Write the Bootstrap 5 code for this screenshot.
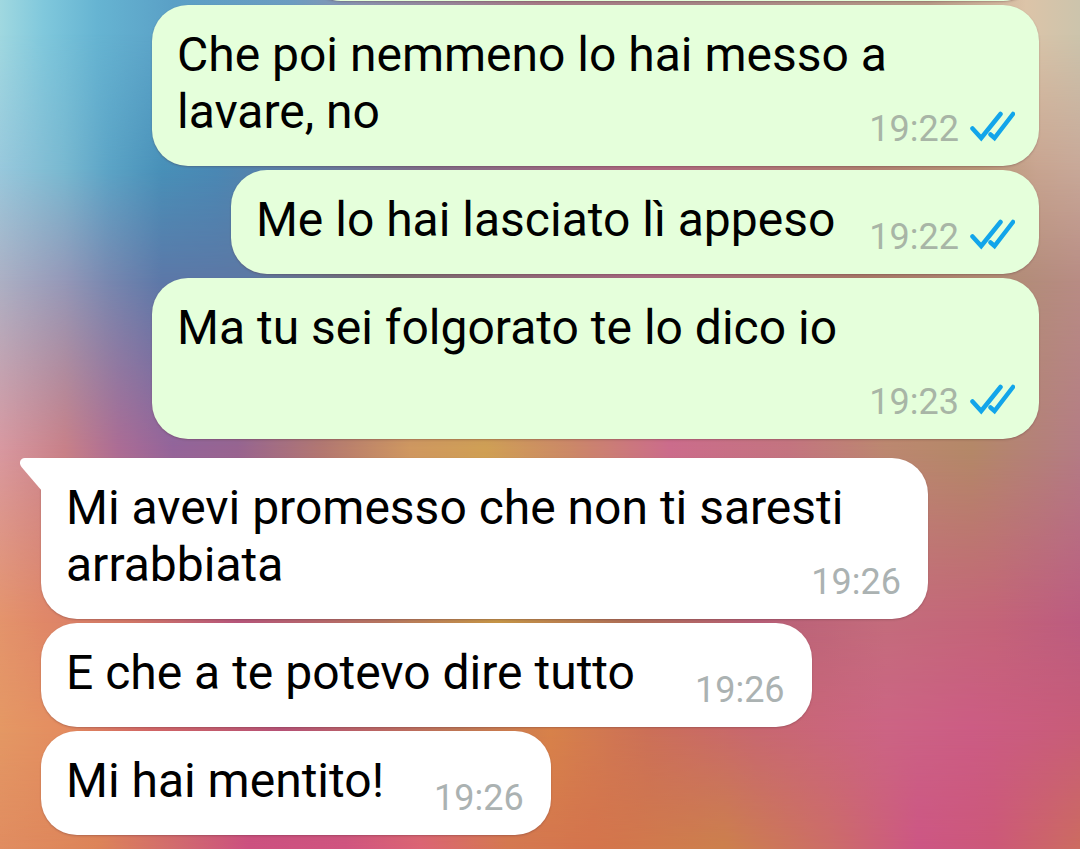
<!DOCTYPE html>
<html lang="it">
<head>
<meta charset="utf-8">
<meta name="viewport" content="width=device-width, initial-scale=1">
<title>Chat</title>
<link href="https://cdn.jsdelivr.net/npm/bootstrap@5.3.0/dist/css/bootstrap.min.css" rel="stylesheet">
<style>
body { font-family: Roboto, sans-serif; color: #000; }
.chat { min-height: 100vh; }
.chat > * { grid-area: 1 / 1; min-width: 0; }
/* wallpaper: horizontal colour bands, each fading in over the one above */
.band { -webkit-mask-image: linear-gradient(transparent var(--from), #000 var(--to)); mask-image: linear-gradient(transparent var(--from), #000 var(--to)); }
.band-1 { background: linear-gradient(90deg, #a0d8e0, #80c8dc 4%, #66b4d2 9%, #5aa0c6 16%, #6c9cc0 27%, #8a94b0 33%, #a87c88 50%, #a88888 65%, #b89c88 86%, #dcc4a8 95%, #ccc4ac); }
.band-2 { --from: 4%; --to: 20%; background: linear-gradient(90deg, #98c8dc, #78b8d0 6%, #5ca4c6 10%, #4890b8 15%, #4a88b4 20%, #806c88 40%, #b06880 60%, #b08070 80%, #b89878 91%, #c8a490 96%, #c8a898); }
.band-3 { --from: 20%; --to: 33%; background: linear-gradient(90deg, #acb0c4, #9498b8 6%, #7888b0 10%, #5c78a8 15%, #5c78a4 23%, #786c70 36%, #a86880 60%, #a87868 80%, #b08c74 92%, #b88c84); }
.band-4 { --from: 33%; --to: 53%; background: linear-gradient(90deg, #d898a0, #c88088 6%, #ac6c94 11%, #94649a 16%, #986490 22%, #b47870 30%, #d09860 38%, #d0a054 45%, #cc8868 53%, #cc6c8c 62%, #c47480 73%, #bc8870 82%, #b48868 90%, #b47c84); }
.band-5 { --from: 53%; --to: 73%; background: linear-gradient(90deg, #e4946c, #e08868 4%, #d47868 12%, #b8587c 22%, #b87860 36%, #c89848 46%, #b07058 58%, #b86078 70%, #c46c7c 82%, #c46478 92%, #bc5c80); }
.band-6 { --from: 73%; --to: 86%; background: linear-gradient(90deg, #e49864, #e48c60 6%, #d46868 14%, #b85478 26%, #c07858 42%, #d8824a 51%, #cc7058 60%, #c86870 70%, #cc6484 82%, #cc5c84 90%, #c85c78); }
.band-7 { --from: 86%; --to: 100%; background: linear-gradient(90deg, #e08c60, #dc8458 9%, #d06870 17%, #cc5080 23%, #d05480 32%, #dc6474 39%, #d47850 47%, #d4744c 55%, #cc804c 67%, #cc6c68 77%, #cc5684 85%, #cc5878 92%, #cc6c60); }
.thread { z-index: 1; overflow: hidden; padding: 0 41px; gap: 4px; }
.bubble { position: relative; max-width: 887px; min-height: 104px; border-radius: 36px; padding: 21px 24px 26px 25px; gap: 34px; box-shadow: 0 1px 2px rgba(80, 40, 50, .3); }
.outgoing { background: #e5ffdb; }
.incoming { background: #fff; padding-right: 27px; gap: 60px; }
.snug { gap: 50px; }
.wide { width: 100%; min-height: 161px; gap: 0; }
/* the time may share the last line of the text */
.wide .meta { margin-top: -36px; }
.previous { width: 734px; margin-top: -103px; }
.reply { margin-top: 15px; border-top-left-radius: 0; }
.msg { font-size: 48px; line-height: 57px; }
.meta { font-size: 36px; line-height: 36px; color: #abb2b2; gap: 11px; margin-bottom: -7px; }
.outgoing .meta { color: #a8b5a6; }
.ticks { width: 45px; height: 36px; }
.tail { position: absolute; left: -21px; top: 0; width: 22px; height: 34px; }
</style>
</head>
<body>
<svg class="d-none" aria-hidden="true">
  <symbol id="read" viewBox="0 0 45 36"><path d="M2.500 17.500 11.200 27 30.500 3M20.500 23.500 24.500 27 43 3" fill="none" stroke="#12a5ea" stroke-width="4.500" stroke-linecap="round"/></symbol>
</svg>
<main class="chat d-grid">
  <div class="band-1"></div>
  <div class="band band-2"></div>
  <div class="band band-3"></div>
  <div class="band band-4"></div>
  <div class="band band-5"></div>
  <div class="band band-6"></div>
  <div class="band band-7"></div>
  <div class="thread d-flex flex-column">
    <div class="bubble outgoing previous align-self-end"></div>
    <div class="bubble outgoing wide d-flex flex-column justify-content-between align-self-end">
      <div class="msg">Che poi nemmeno lo hai messo a lavare, no</div>
      <div class="meta d-flex align-self-end"><time>19:22</time><svg class="ticks" role="img" aria-label="Letto"><use href="#read"/></svg></div>
    </div>
    <div class="bubble outgoing d-flex align-self-end">
      <div class="msg">Me lo hai lasciato lì appeso</div>
      <div class="meta d-flex align-self-end"><time>19:22</time><svg class="ticks" role="img" aria-label="Letto"><use href="#read"/></svg></div>
    </div>
    <div class="bubble outgoing wide d-flex flex-column justify-content-between align-self-end">
      <div class="msg">Ma tu sei folgorato te lo dico io</div>
      <div class="meta d-flex align-self-end"><time>19:23</time><svg class="ticks" role="img" aria-label="Letto"><use href="#read"/></svg></div>
    </div>
    <div class="bubble incoming wide reply d-flex flex-column justify-content-between align-self-start">
      <svg class="tail" viewBox="0 0 22 34" aria-hidden="true"><path d="M22 0H5C0 0-1.500 5 1.500 9L22 33Z" fill="#fff"/></svg>
      <div class="msg">Mi avevi promesso che non ti saresti arrabbiata</div>
      <div class="meta align-self-end"><time>19:26</time></div>
    </div>
    <div class="bubble incoming d-flex align-self-start">
      <div class="msg">E che a te potevo dire tutto</div>
      <div class="meta align-self-end"><time>19:26</time></div>
    </div>
    <div class="bubble incoming snug d-flex align-self-start">
      <div class="msg">Mi hai mentito!</div>
      <div class="meta align-self-end"><time>19:26</time></div>
    </div>
  </div>
</main>
<script src="https://cdn.jsdelivr.net/npm/bootstrap@5.3.0/dist/js/bootstrap.bundle.min.js"></script>
</body>
</html>
